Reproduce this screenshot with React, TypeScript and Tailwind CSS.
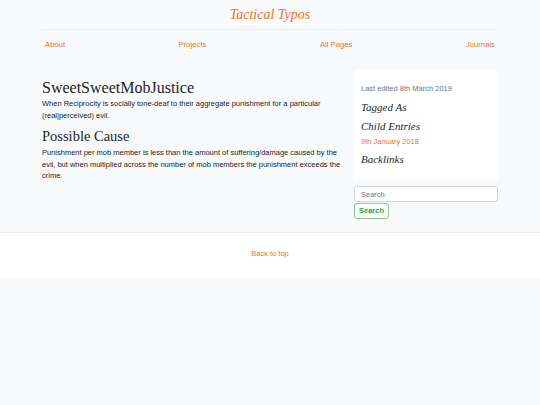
const ORANGE = "text-[#e8762d]";

function Header() {
  return (
    <header className="w-[456px] mx-auto">
      <div className="pt-[5px] pb-[6px] border-b border-[#eceef0] text-center leading-[17px]">
        <a className={`text-[14px] leading-[17px] italic ${ORANGE} font-['Liberation_Serif',Georgia,serif]`}>
          Tactical Typos
        </a>
      </div>
      <nav className="flex justify-between px-[3px] pt-[9px] text-[7.7px] leading-[12px]">
        <a className={ORANGE}>About</a>
        <a className={ORANGE}>Projects</a>
        <a className={ORANGE}>All Pages</a>
        <a className={ORANGE}>Journals</a>
      </nav>
    </header>
  );
}

function Article() {
  return (
    <article className="w-[300px] text-[#212529]">
      <h1 className="pt-[10px] mb-[2px] text-[16px] leading-[16px] font-['Liberation_Serif',Georgia,serif]">
        SweetSweetMobJustice
      </h1>
      <p className="text-[7.5px] leading-[12px]">
        When Reciprocity is socially tone-deaf to their aggregate punishment for a particular (real|perceived) evil.
      </p>
      <h2 className="mt-[6.5px] text-[14.5px] leading-[14.5px] font-['Liberation_Serif',Georgia,serif]">
        Possible Cause
      </h2>
      <p className="mt-[4px] text-[7.5px] leading-[11.5px]">
        Punishment per mob member is less than the amount of suffering/damage caused by the evil, but when multiplied across the number of mob members the punishment exceeds the crime.
      </p>
    </article>
  );
}

function Sidebar() {
  const heading = "text-[11px] leading-[13px] italic text-[#212529] font-['Liberation_Serif',Georgia,serif]";
  return (
    <aside className="w-[144px]">
      <div className="bg-white rounded-[3px] px-[7px] pt-[13px] pb-[14.5px]">
        <p className="text-[7.5px] leading-[12px] text-[#6c757d]">Last edited 8th March 2019</p>
        <h4 className={`mt-[5.5px] ${heading}`}>Tagged As</h4>
        <h4 className={`mt-[6px] ${heading}`}>Child Entries</h4>
        <a className={`block mt-[3.5px] text-[7.5px] leading-[12px] ${ORANGE}`}>9th January 2018</a>
        <h4 className={`mt-[4.5px] ${heading}`}>Backlinks</h4>
      </div>
      <form className="mt-[6px]">
        <input
          placeholder="Search"
          className="block w-full h-[16px] px-[6px] text-[7.5px] bg-white border border-[#ced4da] rounded-[3px] placeholder:text-[#6c757d] outline-none"
        />
        <button
          type="button"
          className="block mt-px h-[16px] px-[4px] text-[7.5px] font-bold text-[#28a745] border border-[#5cb85c]/70 rounded-[3px] bg-transparent"
        >
          Search
        </button>
      </form>
    </aside>
  );
}

export default function App() {
  return (
    <div className="min-h-[405px] bg-[#f8f9fa] font-['Liberation_Sans',Arial,sans-serif]">
      <Header />
      <main className="w-[456px] mx-auto mt-[19px] flex justify-between pb-[13px]">
        <Article />
        <Sidebar />
      </main>
      <footer className="bg-white border-t border-[#e9ecef] h-[45px] pt-[12px] text-center leading-[12px]">
        <a className={`text-[7.5px] leading-[12px] ${ORANGE}`}>Back to top</a>
      </footer>
    </div>
  );
}
